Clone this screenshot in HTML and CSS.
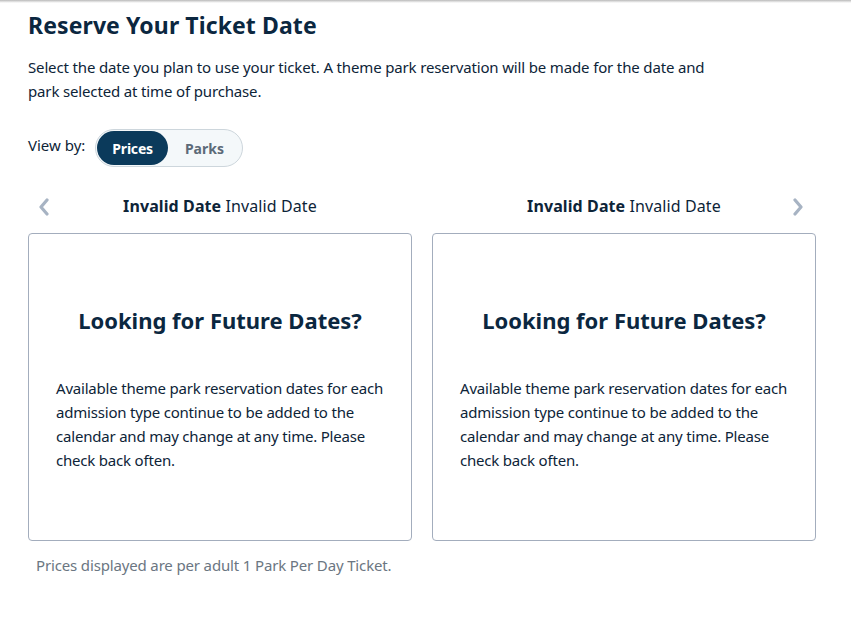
FILE: index.html
```html
<!DOCTYPE html>
<html lang="en">
<head>
<meta charset="utf-8">
<title>Reserve Your Ticket Date</title>
<link rel="stylesheet" href="styles.css">
</head>
<body>
<div class="topshade"></div>
<main class="page">
  <h1 class="title">Reserve Your Ticket Date</h1>
  <p class="intro">Select the date you plan to use your ticket. A theme park reservation will be made for the date and park selected at time of purchase.</p>
  <div class="viewby">
    <span class="viewby-label">View by:</span>
    <div class="toggle">
      <span class="toggle-opt active">Prices</span>
      <span class="toggle-opt">Parks</span>
    </div>
  </div>
  <div class="months">
    <div class="month">
      <div class="month-head">
        <span class="arrow arrow-left"><svg width="14" height="18" viewBox="0 0 14 18"><path d="M10 2 L4 9 L10 16" fill="none" stroke="#a7b3c3" stroke-width="3.2" stroke-linecap="round" stroke-linejoin="round"/></svg></span>
        <span class="month-title"><b>Invalid Date</b> Invalid Date</span>
      </div>
      <div class="card">
        <h2 class="card-title">Looking for Future Dates?</h2>
        <p class="card-text">Available theme park reservation dates for each admission type continue to be added to the calendar and may change at any time. Please check back often.</p>
      </div>
    </div>
    <div class="month">
      <div class="month-head">
        <span class="month-title"><b>Invalid Date</b> Invalid Date</span>
        <span class="arrow arrow-right"><svg width="14" height="18" viewBox="0 0 14 18"><path d="M4 2 L10 9 L4 16" fill="none" stroke="#a7b3c3" stroke-width="3.2" stroke-linecap="round" stroke-linejoin="round"/></svg></span>
      </div>
      <div class="card">
        <h2 class="card-title">Looking for Future Dates?</h2>
        <p class="card-text">Available theme park reservation dates for each admission type continue to be added to the calendar and may change at any time. Please check back often.</p>
      </div>
    </div>
  </div>
  <p class="note">Prices displayed are per adult 1 Park Per Day Ticket.</p>
</main>
</body>
</html>
```
FILE: styles.css
```css
html, body {
  margin: 0;
  padding: 0;
  background: #ffffff;
}
body {
  font-family: "Noto Sans", "Open Sans", sans-serif;
  color: #0d2438;
}
.topshade {
  height: 3px;
  background: linear-gradient(#b9b9b9, #e6e6e6 60%, #ffffff);
}
.page {
  padding: 0 35px 0 28px;
}
.title {
  margin: 8px 0 0;
  font-size: 23px;
  line-height: 28px;
  font-weight: 700;
  color: #0b2740;
  letter-spacing: 0.1px;
}
.intro {
  margin: 16px 0 0;
  font-size: 15px;
  line-height: 24px;
  width: 690px;
  color: #0d2438;
  letter-spacing: -0.15px;
}
.viewby {
  display: flex;
  align-items: center;
  margin-top: 26px;
  gap: 10px;
}
.viewby-label {
  font-size: 15px;
  line-height: 20px;
  margin-top: -6px;
}
.toggle {
  display: flex;
  align-items: center;
  height: 36px;
  padding: 0 1px;
  border: 1px solid #cdd6dc;
  border-radius: 19px;
  background: #f4f8fa;
}
.toggle-opt {
  height: 34px;
  display: flex;
  align-items: center;
  justify-content: center;
  font-size: 14px;
  font-weight: 700;
  color: #5c6a78;
  border-radius: 17px;
  padding: 0 17px 0 17px;
}
.toggle-opt.active {
  background: #0b3a5b;
  color: #ffffff;
  padding: 0 15px;
  letter-spacing: -0.2px;
}
.months {
  display: grid;
  grid-template-columns: 384px 384px;
  gap: 20px;
  margin-top: 24px;
}
.month-head {
  position: relative;
  height: 30px;
  display: flex;
  align-items: center;
  justify-content: center;
}
.month-title {
  font-size: 16px;
  color: #0d2438;
  letter-spacing: 0.1px;
}
.month-title b {
  font-weight: 700;
}
.arrow {
  position: absolute;
  top: 7px;
  display: flex;
}
.arrow-left {
  left: 9px;
}
.arrow-right {
  right: 11px;
}
.card {
  margin-top: 12px;
  height: 306px;
  border: 1px solid #a3adbd;
  border-radius: 4px;
  padding: 0 22px 0 27px;
}
.card-title {
  margin: 71px 0 0 -5px;
  text-align: center;
  font-size: 22px;
  line-height: 30px;
  font-weight: 700;
  color: #0b2740;
}
.card-text {
  margin: 41px 0 0;
  font-size: 15px;
  line-height: 24px;
  color: #0d2438;
  letter-spacing: -0.2px;
}
.note {
  margin: 12px 0 0 8px;
  font-size: 15px;
  line-height: 24px;
  color: #6b7682;
  letter-spacing: -0.15px;
}
```
